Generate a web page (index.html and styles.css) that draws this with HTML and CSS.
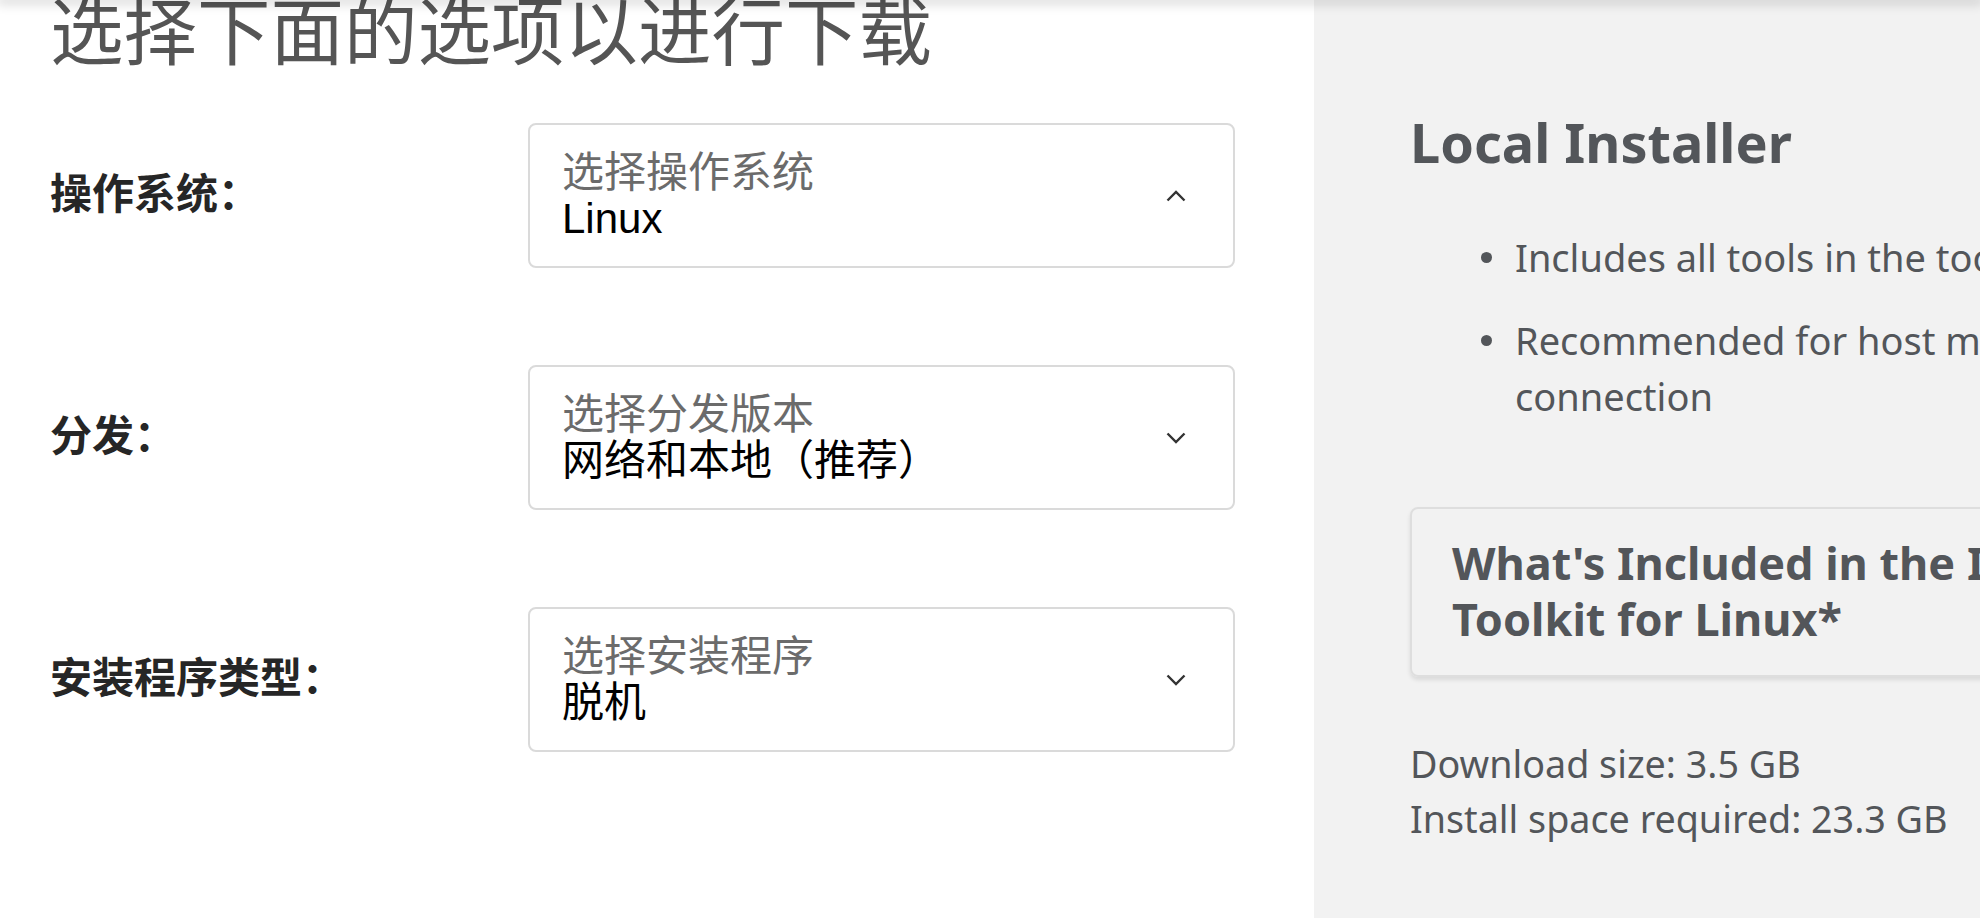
FILE: index.html
```html
<!DOCTYPE html>
<html lang="zh-CN">
	<head>
		<meta charset="UTF-8" />
		<title>下载</title>
		<link rel="stylesheet" href="styles.css">
	</head>
	<body>
		<div class="top-shadow"></div>
		<div class="page">
			<section class="picker">
				<h1>选择下面的选项以进行下载</h1>
				<div class="rows">
					<div class="row">
						<span class="label">操作系统：</span>
						<div class="select">
							<div class="select-text">
								<div class="placeholder">选择操作系统</div>
								<div class="value">Linux</div>
							</div>
							<svg class="chevron" viewBox="0 0 20 12" width="20" height="12"><polyline points="1.5,10.5 10,2 18.5,10.5" /></svg>
						</div>
					</div>
					<div class="row">
						<span class="label">分发：</span>
						<div class="select">
							<div class="select-text">
								<div class="placeholder">选择分发版本</div>
								<div class="value">网络和本地（推荐）</div>
							</div>
							<svg class="chevron" viewBox="0 0 20 12" width="20" height="12"><polyline points="1.5,1.5 10,10 18.5,1.5" /></svg>
						</div>
					</div>
					<div class="row">
						<span class="label">安装程序类型：</span>
						<div class="select">
							<div class="select-text">
								<div class="placeholder">选择安装程序</div>
								<div class="value">脱机</div>
							</div>
							<svg class="chevron" viewBox="0 0 20 12" width="20" height="12"><polyline points="1.5,1.5 10,10 18.5,1.5" /></svg>
						</div>
					</div>
				</div>
			</section>
			<aside class="installer">
				<h2>Local Installer</h2>
				<ul>
					<li>Includes all tools in the toolkit</li>
					<li>Recommended for host machines with poor or no internet connection</li>
				</ul>
				<div class="included">
					<h3>What's Included in the Intel® oneAPI Base<br>Toolkit for Linux*</h3>
				</div>
				<p class="size">Download size: 3.5 GB<br>Install space required: 23.3 GB</p>
			</aside>
		</div>
	</body>
</html>
```
FILE: styles.css
```css
* {
	margin: 0;
	padding: 0;
	box-sizing: border-box;
}
body {
	overflow: hidden;
	background-color: #fff;
	font-family: "Noto Sans", "Noto Sans CJK SC", sans-serif;
}
.top-shadow {
	position: fixed;
	top: 0;
	left: 0;
	right: 0;
	height: 0;
	box-shadow: 0 0 12px 3px rgba(0, 0, 0, 0.22);
	z-index: 10;
}
.page {
	display: flex;
	min-height: 918px;
}
.picker {
	flex: 0 0 1314px;
	padding-left: 50px;
}
.picker h1 {
	margin-top: -16px;
	font-family: "Noto Sans CJK SC", sans-serif;
	font-size: 73.5px;
	font-weight: 400;
	line-height: 86px;
	color: #555;
}
.rows {
	display: flex;
	flex-direction: column;
	gap: 97px;
	margin-top: 53px;
}
.row {
	display: grid;
	grid-template-columns: 478px 707px;
	align-items: center;
}
.label {
	margin-bottom: 10px;
	font-family: "Noto Sans CJK SC", sans-serif;
	font-size: 42px;
	font-weight: 700;
	color: #262626;
}
.select {
	display: flex;
	align-items: center;
	justify-content: space-between;
	height: 145px;
	padding: 0 47px 0 32px;
	border: 2px solid #dadada;
	border-radius: 8px;
	background-color: #fff;
}
.select-text {
	font-family: "Liberation Sans", "Noto Sans CJK SC", sans-serif;
	font-size: 42px;
	line-height: 46px;
}
.placeholder {
	color: #6b6b6b;
}
.value {
	color: #000;
}
.chevron {
	fill: none;
	stroke: #333;
	stroke-width: 2.4;
}
.installer {
	flex: 0 0 1480px;
	padding: 110px 110px 0 96px;
	background-color: #f2f2f2;
	color: #53565a;
}
.installer h2 {
	font-size: 54px;
	font-weight: 700;
	line-height: 65px;
}
.installer ul {
	list-style: none;
	margin-top: 54px;
}
.installer li {
	display: flex;
	font-size: 38px;
	line-height: 56px;
}
.installer li + li {
	margin-top: 27px;
}
.installer li::before {
	content: "";
	flex: 0 0 11px;
	height: 11px;
	margin: 23px 23px 0 71px;
	border-radius: 50%;
	background-color: #53565a;
}
.included {
	margin-top: 83px;
	padding: 26px 40px 28px;
	border: 2px solid #dedede;
	border-radius: 8px;
	box-shadow: 0 3px 4px rgba(0, 0, 0, 0.1);
}
.included h3 {
	font-size: 45px;
	font-weight: 700;
	line-height: 56px;
}
.size {
	margin-top: 59px;
	font-size: 37.7px;
	line-height: 55px;
}
```
